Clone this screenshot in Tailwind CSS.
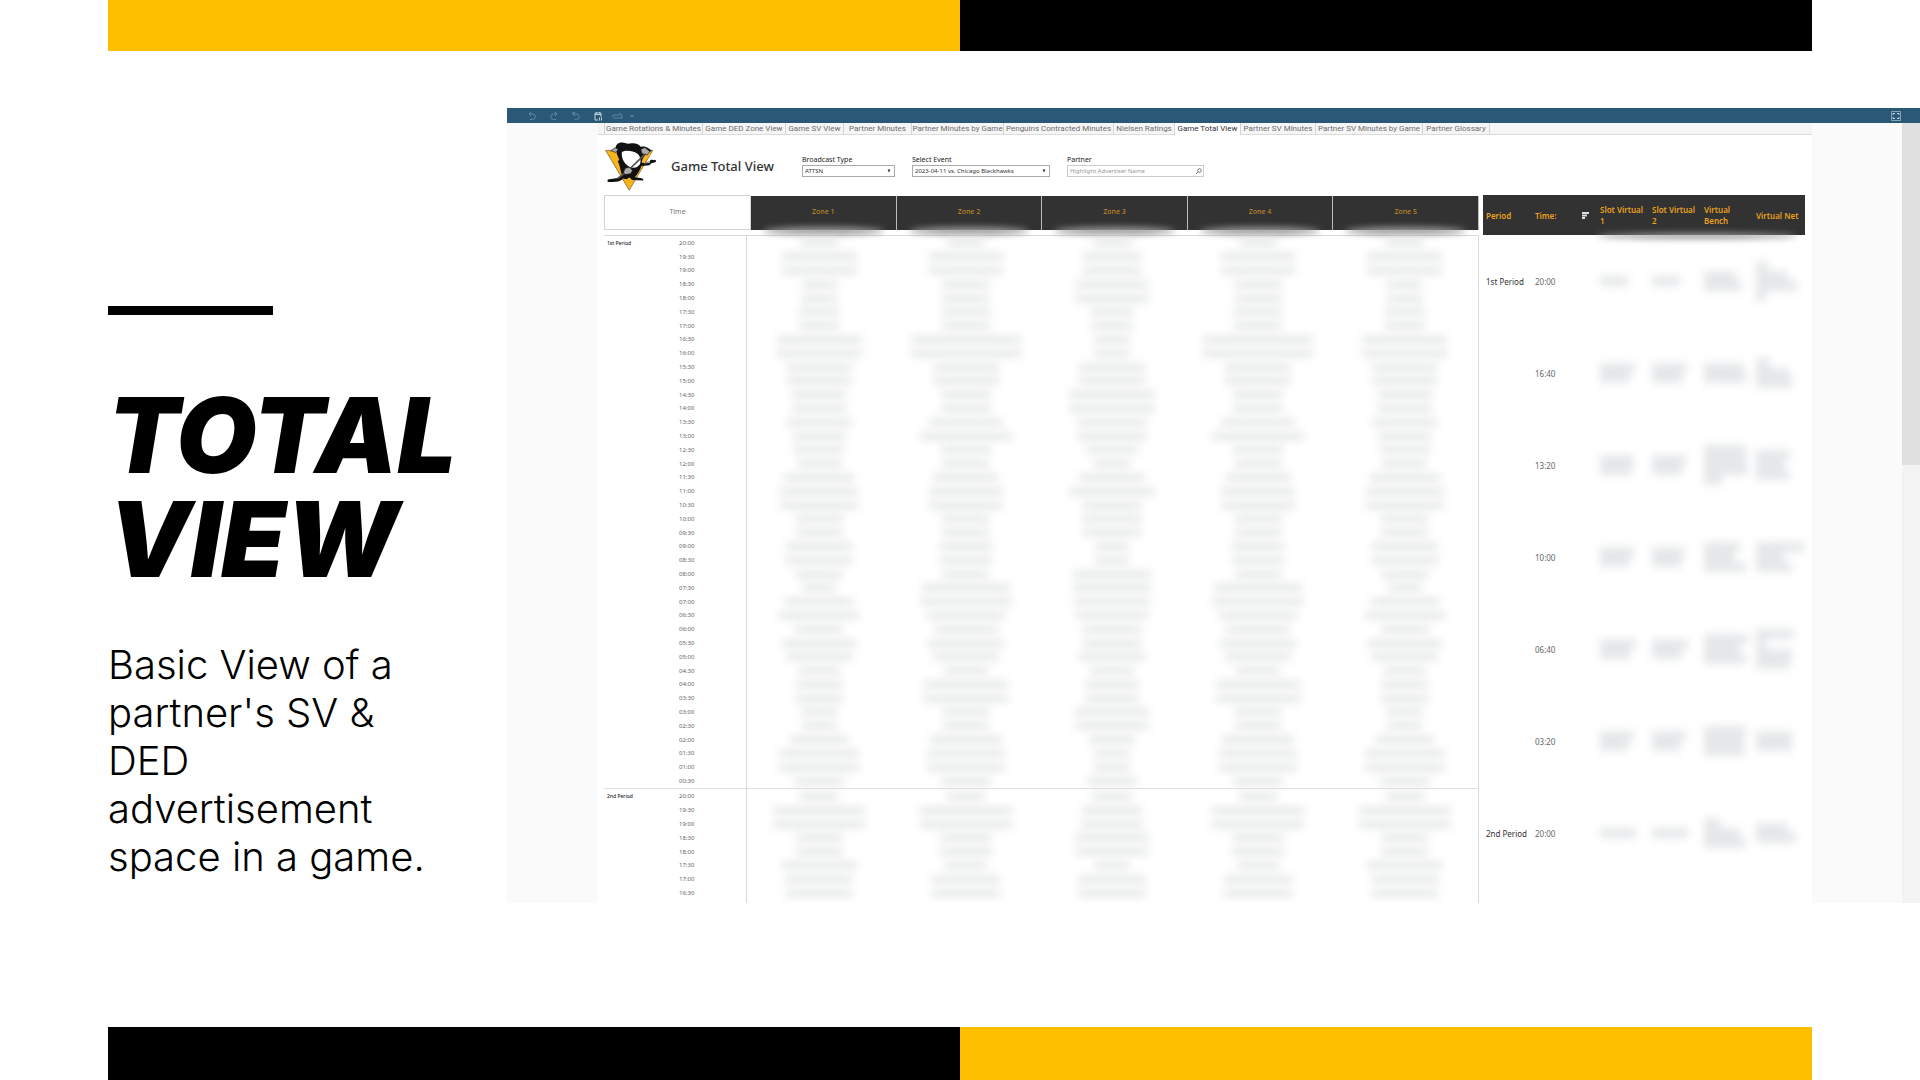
<!DOCTYPE html>
<html lang="en">
<head>
<meta charset="utf-8">
<title>Total View</title>
<script src="https://cdn.jsdelivr.net/npm/@tailwindcss/browser@4"></script>
</head>
<body class="flex min-h-screen flex-col overflow-x-hidden bg-white font-['Inter',sans-serif] text-black">

<div class="mx-[108px] flex h-[51px]"><div class="flex-1 bg-[#ffbf00]"></div><div class="flex-1 bg-black"></div></div>

<main class="mt-[57px] flex">
  <section class="w-[507px] shrink-0 pl-[108px] pt-[198px]">
    <div class="h-[9px] w-[165px] bg-black"></div>
    <h1 class="mt-[68px] text-[104px] leading-[104px] font-black italic">TOTAL<br>VIEW</h1>
    <p class="mt-[50px] text-[40px] leading-[48px] font-light whitespace-nowrap">Basic View of a<br>partner's SV &amp;<br>DED<br>advertisement<br>space in a game.</p>
  </section>

  <section class="flex h-[795px] min-w-0 flex-1 flex-col overflow-hidden bg-[#fafafa] font-['Noto_Sans',sans-serif]">
    <header class="flex h-[15px] shrink-0 items-center justify-between bg-[#2a5877] pl-[20px] pr-[18px] text-[#5d8aa5]">
      <div class="flex items-center">
        <button aria-label="Undo" class="w-[22px]"><svg class="h-[10px] w-[10px]" viewBox="0 0 10 10" fill="none" stroke="currentColor"><path d="M4 1 2 3l2 2M2 3h3.500a2.600 2.600 0 0 1 0 5.500H3"/></svg></button>
        <button aria-label="Redo" class="w-[22px]"><svg class="h-[10px] w-[10px]" viewBox="0 0 10 10" fill="none" stroke="currentColor"><path d="M6 1l2 2-2 2M8 3H4.500a2.600 2.600 0 0 0 0 5.500H7"/></svg></button>
        <button aria-label="Revert" class="w-[22px]"><svg class="h-[10px] w-[10px]" viewBox="0 0 10 10" fill="none" stroke="currentColor"><path d="M2 1v3M4 1 2 3l2 2M2 3h3.500a2.600 2.600 0 0 1 0 5.500H4"/></svg></button>
        <button aria-label="Pause updates" class="w-[19px] text-[#c3d3dd]"><svg class="h-[10px] w-[10px]" viewBox="0 0 10 10" fill="none" stroke="currentColor"><path d="M5 9H2V2h6v4M2 3.500h6M3.500 1v1M6.500 1v1M6.500 6.500v3M8.500 6.500v3"/></svg></button>
        <button aria-label="View options" class="flex items-center gap-[7px]"><svg class="h-[10px] w-[11px]" viewBox="0 0 11 10" fill="none" stroke="currentColor"><path d="M1 6.500V4h7M7 2l3 2M10 4v3H2"/></svg><svg class="h-[4px] w-[4px]" viewBox="0 0 4 4"><path fill="currentColor" d="M0 1h4L2 3.500z"/></svg></button>
      </div>
      <button aria-label="Full screen" class="text-[#c3d3dd]"><svg class="h-[10px] w-[12px]" viewBox="0 0 12 10" fill="none" stroke="currentColor"><path opacity=".6" d="M1.500.5h9v9h-9z"/><path d="M3 4V2.500h2M7 2.500h2V4M9 6v1.500H7M5 7.500H3V6"/></svg></button>
    </header>

    <div class="flex min-h-0 flex-1">
      <div class="ml-[91px] flex min-w-0 flex-1 flex-col bg-white">
        <nav class="flex h-[12px] shrink-0 border-b border-[#dcdcdc] bg-[#f5f5f5] pl-[6px] font-['Roboto',sans-serif] text-[8px] leading-[11px] text-[#6e6e6e]" id="tabs"></nav>

        <div class="flex h-[60px] shrink-0 items-start pl-[6px] pt-[6px]">
          <svg class="h-[51px] w-[53px] shrink-0" viewBox="310 122 160 153" role="img" aria-label="Penguins logo">
            <path fill="#f8b41c" stroke="#6b5420" stroke-width="2" d="M315 150h142l-71 120z"/>
            <path fill="#111" d="M345 146c-1-14 9-21 20-20 8 0 13 5 24 3 14-3 27 2 32 10 8-2 17-1 22 4l12 8-8 4-12 8c-2 9-2 16-2 22l14-1 4-6 15 1 1 6-14 4-6 6-24 2c-4 14-13 25-20 34l18 2 8 3-1 5-33-2-8-7-10 5-9-2c-7 9-22 12-47 10v-7l30-5 13-9c-5-16-6-30-13-43-4-9-5-17-3-24z"/>
            <path fill="#fff" d="M364 155c12-7 33-4 46 4 10 8 13 22 8 33-6 9-14 12-24 10-20-4-33-27-30-47z"/>
            <path fill="#f8b41c" d="m331 153 14-1 11 26-9 10zM440 161l10 1-18 26-8-1c0-10 6-20 16-26z"/>
            <path fill="none" stroke="#555" stroke-width="5" d="m437 158-57 55-30 22"/>
            <path fill="#aaa" stroke="#222" stroke-width="2" d="m330 151 13-9 10 5-7 9zM421 147l12-6 15 12-7 10-16-3zM374 204l12-3 10 9-5 10-17 3-5-7z"/>
            <path stroke="#fff" stroke-width="2" d="m325 232 17-2M431 188l18-2"/>
          </svg>
          <h2 class="ml-[14px] mt-[15px] w-[131px] shrink-0 text-[13px] leading-[20px] font-medium whitespace-nowrap text-[#333]">Game Total View</h2>
          <div class="mt-[14px] flex items-start text-[6px] leading-[10px] text-[#333]">
            <div class="mr-[17px] w-[93px]">
              <label for="type" class="block text-[7px] whitespace-nowrap text-[#222]">Broadcast Type</label>
              <div class="relative"><select id="type" class="block h-[12px] w-full appearance-none border border-[#aaa] bg-white px-[2px] text-[6px] leading-[10px]"><option>ATTSN</option></select><svg class="pointer-events-none absolute top-[4px] right-[4px] h-[4px] w-[4px]" viewBox="0 0 4 4"><path fill="#333" d="M.5.5h3L2 3.500z"/></svg></div>
            </div>
            <div class="mr-[17px] w-[138px]">
              <label for="event" class="block text-[7px] whitespace-nowrap text-[#222]">Select Event</label>
              <div class="relative"><select id="event" class="block h-[12px] w-full appearance-none border border-[#aaa] bg-white px-[2px] text-[6px] leading-[10px]"><option>2023-04-11 vs. Chicago Blackhawks</option></select><svg class="pointer-events-none absolute top-[4px] right-[4px] h-[4px] w-[4px]" viewBox="0 0 4 4"><path fill="#333" d="M.5.5h3L2 3.500z"/></svg></div>
            </div>
            <div class="w-[137px]">
              <label for="partner" class="block text-[7px] text-[#222]">Partner</label>
              <div class="relative"><input id="partner" placeholder="Highlight Advertiser Name" class="block h-[12px] w-full border border-[#ccc] px-[2px] text-[6px] leading-[10px] placeholder:text-[#999]"><svg class="absolute top-[3px] right-[2px] h-[6px] w-[6px]" viewBox="0 0 6 6" fill="none" stroke="#777"><circle cx="3.500" cy="2.500" r="1.800"/><path d="M2 4 0 6"/></svg></div>
            </div>
          </div>
        </div>

        <div class="grid min-h-0 flex-1 grid-cols-[875fr_322fr] gap-[4px] pl-[6px] pr-[7px]">
          <div class="flex min-w-0 flex-col">
            <table class="h-[35px] w-full shrink-0 table-fixed border-collapse text-[7px]">
              <thead><tr id="zones"><th class="w-[146px] border border-[#d4d4d4] font-normal text-[#777]">Time</th></tr></thead>
            </table>
            <div class="mt-[5px] border-t border-r border-[#d9d9d9]">
              <table class="h-[668px] w-full table-fixed border-collapse text-[6px] leading-[8px]">
                <colgroup><col class="w-[75px]"><col class="w-[67px]"><col><col><col><col><col></colgroup>
                <tbody id="minutes"></tbody>
              </table>
            </div>
          </div>

          <table class="w-full table-fixed self-start border-collapse text-left text-[8px] leading-[11px]">
            <colgroup><col class="w-[49px]"><col class="w-[65px]"><col class="w-[52px]"><col class="w-[52px]"><col class="w-[52px]"><col></colgroup>
            <thead>
              <tr class="h-[40px] bg-[#323232] text-[#e9a11f]">
                <th class="p-0 pl-[3px] font-semibold">Period</th>
                <th class="p-0 pl-[3px] font-semibold"><span class="flex items-center justify-between pr-[8px]">Time:<svg class="h-[7px] w-[7px]" viewBox="0 0 7 7" fill="#ddd"><path d="M0 0h7v2H0zM0 2.500h5v2H0zM0 5h3v2H0z"/></svg></span></th>
                <th class="relative p-0 pl-[3px] font-semibold whitespace-nowrap">Slot Virtual<br>1<span class="absolute -bottom-[4px] left-0 h-[6px] w-[200px] rounded-[50%] bg-[#999] blur-[3px]"></span></th>
                <th class="p-0 pl-[3px] font-semibold whitespace-nowrap">Slot Virtual<br>2</th>
                <th class="p-0 pl-[3px] font-semibold">Virtual<br>Bench</th>
                <th class="p-0 pl-[3px] font-semibold whitespace-nowrap">Virtual Net</th>
              </tr>
            </thead>
            <tbody id="virtual"></tbody>
          </table>
        </div>
      </div>
      <div class="ml-[90px] w-[18px] bg-[#f3f3f3]"><div class="h-[342px] bg-[#e0e0e0]"></div></div>
    </div>
  </section>
</main>

<div class="mx-[108px] mt-auto flex h-[53px]"><div class="flex-1 bg-black"></div><div class="flex-1 bg-[#ffbf00]"></div></div>

<script>
const tabs = [['Game Rotations & Minutes',99],['Game DED Zone View',83],['Game SV View',58],['Partner Minutes',68],['Partner Minutes by Game',92],['Penguins Contracted Minutes',110],['Nielsen Ratings',61],['Game Total View',66],['Partner SV Minutes',75],['Partner SV Minutes by Game',107],['Partner Glossary',67]];
document.getElementById('tabs').innerHTML = tabs.map(([name, w], i) =>
  `<a href="#" class="flex shrink-0 justify-center border-r border-[#d4d4d4] whitespace-nowrap ${i === 0 ? 'border-l' : ''} ${i === 7 ? 'h-[12px] bg-white text-[#333]' : ''}" style="width:${w}px">${name.replace('&', '&amp;')}</a>`).join('');

document.getElementById('zones').innerHTML += [1,2,3,4,5].map(n =>
  `<th class="relative border-r border-[#bbb] bg-[#323232] font-medium text-[#bd8526]">Zone ${n}<span class="absolute inset-x-[12px] -bottom-[5px] h-[8px] rounded-[50%] bg-[#999] blur-[3px]"></span></th>`).join('');

// Widths of the redacted partner names, one per half minute
const a = [38,75,75,35,35,40,40,85,85,65,65,54,54,65,53,50,45,70,78,78,47,47,66,66,47,34,68,80,48,74,66,42,47,48,35,35,58,80,80,50,38,92,92,47,47,76,66,66];
const b = [38,74,74,47,47,48,48,110,110,66,66,50,50,74,92,50,47,65,74,74,47,47,52,52,47,88,92,78,64,76,66,44,85,85,46,46,72,78,78,50,38,92,92,52,52,42,68,68];
const c = [38,58,58,74,74,42,42,36,36,66,66,86,86,70,70,52,36,66,86,58,58,58,34,34,78,78,76,72,58,58,66,44,54,54,74,74,46,36,36,50,40,60,60,74,74,36,68,68];
const clock = i => { const s = 1200 - (i % 40) * 30; return String(Math.floor(s / 60)).padStart(2, '0') + ':' + String(s % 60).padStart(2, '0'); };
let rows = '';
for (let i = 0; i < 48; i++) {
  const label = i === 0 ? '1st Period' : i === 40 ? '2nd Period' : '';
  rows += `<tr class="${i === 40 ? 'border-t border-[#dedede]' : ''}"><th class="p-0 pl-[3px] text-left text-[5px] font-medium whitespace-nowrap text-[#222]">${label}</th><td class="border-r border-[#d9d9d9] p-0 text-[#666]">${clock(i)}</td>` +
    [a, b, c, b, a].map(z => `<td class="p-0"><div class="mx-auto h-[7px] bg-[#e4e6e6] blur-[4px]" style="width:${z[i]}px"></div></td>`).join('') + '</tr>';
}
rows += '<tr class="h-[4px]"><td></td><td class="border-r border-[#d9d9d9] p-0"></td></tr>';
document.getElementById('minutes').innerHTML = rows;

// Line widths of each redacted cell
const virtual = [
  ['1st Period','20:00',[[28],[28],[32,38],[12,32,42,10]]],
  ['','16:40',[[35,30],[35,30],[40,42],[14,34,36]]],
  ['','13:20',[[34,32],[34,30],[42,42,44,18],[34,28,34]]],
  ['','10:00',[[34,30],[32,30],[36,30,42],[48,28,36]]],
  ['','06:40',[[36,30],[36,30],[44,36,42],[38,10,36,34]]],
  ['','03:20',[[34,28],[34,28],[42,40,40],[36,36]]],
  ['2nd Period','20:00',[[36],[36],[16,36,42],[32,40]]]
];
document.getElementById('virtual').innerHTML = virtual.map(([p, t, cells]) =>
  `<tr class="h-[92px]"><th class="p-0 pl-[3px] font-normal whitespace-nowrap text-[#333]">${p}</th><td class="p-0 pl-[3px] text-[#666]">${t}</td>` +
  cells.map(lines => `<td class="p-0 pl-[3px]"><div class="flex flex-col blur-[4px]">${lines.map(w => `<div class="h-[10px] bg-[#e5e7e9]" style="width:${w}px"></div>`).join('')}</div></td>`).join('') + '</tr>').join('');
</script>
</body>
</html>
